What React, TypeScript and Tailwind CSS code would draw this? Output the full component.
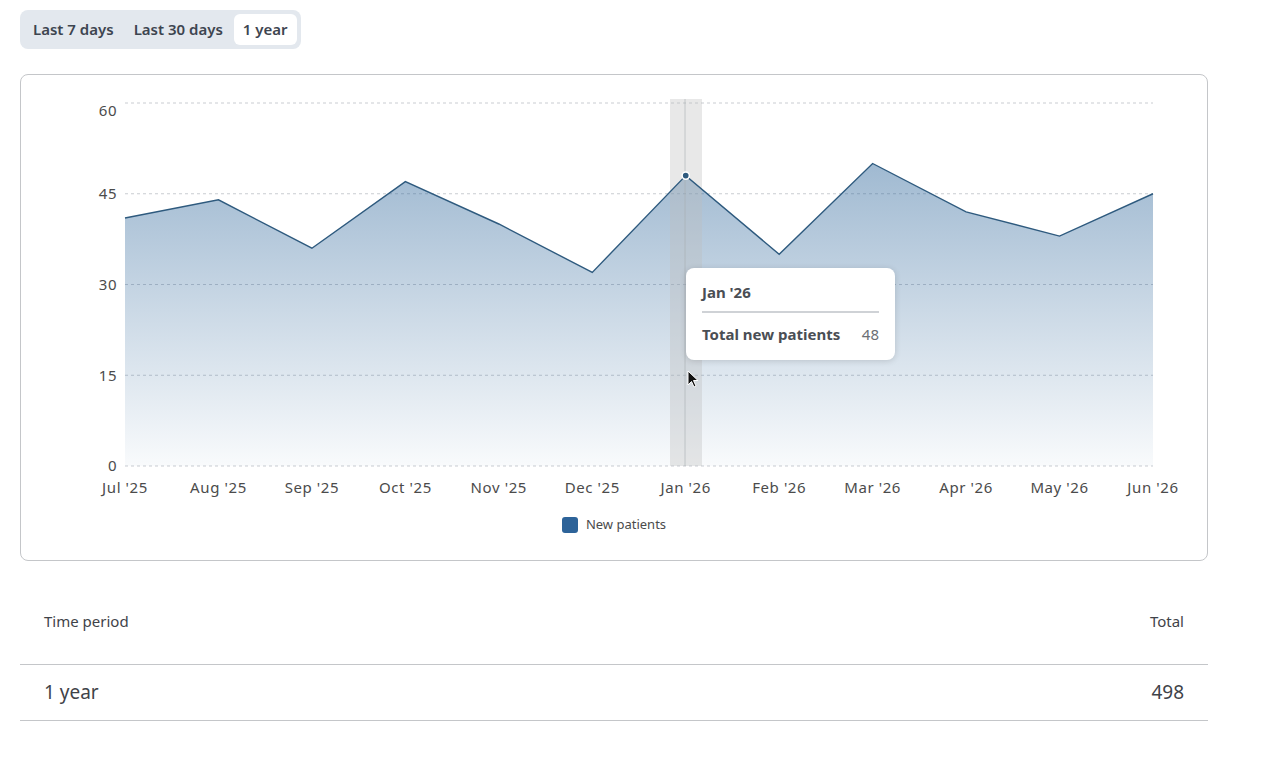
import { useState } from "react";

const data = [
  { label: "Jul '25", value: 41 },
  { label: "Aug '25", value: 44 },
  { label: "Sep '25", value: 36 },
  { label: "Oct '25", value: 47 },
  { label: "Nov '25", value: 40 },
  { label: "Dec '25", value: 32 },
  { label: "Jan '26", value: 48 },
  { label: "Feb '26", value: 35 },
  { label: "Mar '26", value: 50 },
  { label: "Apr '26", value: 42 },
  { label: "May '26", value: 38 },
  { label: "Jun '26", value: 45 },
];

const ranges = ["Last 7 days", "Last 30 days", "1 year"];

// plot area in page coordinates, card sits at (21, 75)
const X0 = 125;
const X1 = 1153;
const Y0 = 466;
const PX = (X1 - X0) / (data.length - 1);
const PY = (Y0 - 103) / 60;

const px = (i: number) => X0 + i * PX;
const py = (v: number) => Y0 - v * PY;

function Chart() {
  const line = data.map((d, i) => `${i === 0 ? "M" : "L"}${px(i)},${py(d.value)}`).join(" ");
  const area = `${line} L${X1},${Y0} L${X0},${Y0} Z`;
  const active = 6;

  return (
    <svg width={1186} height={430} className="block">
      <defs>
        <linearGradient id="fill" x1="0" y1="163" x2="0" y2="466" gradientUnits="userSpaceOnUse">
          <stop offset="0" stopColor="#2b6499" stopOpacity={0.45} />
          <stop offset="1" stopColor="#2b6499" stopOpacity={0.03} />
        </linearGradient>
      </defs>
      <g transform="translate(-21,-75)">
        {[0, 15, 30, 45, 60].map((t) => (
          <line key={t} x1={X0} x2={X1} y1={py(t)} y2={py(t)} stroke="#c9ccd1" strokeDasharray="3 3" />
        ))}
        {[
          { t: "60", y: 111 },
          { t: "45", y: 194 },
          { t: "30", y: 285 },
          { t: "15", y: 376 },
          { t: "0", y: 466 },
        ].map((l) => (
          <text key={l.t} x={117} y={l.y} dy="0.35em" textAnchor="end" fontSize={15} letterSpacing={0.5} fill="#4b4b4b">
            {l.t}
          </text>
        ))}
        <path d={area} fill="url(#fill)" />
        <rect x={670} y={99} width={32} height={367} fill="#bdbdbd" fillOpacity={0.35} />
        <line x1={685} x2={685} y1={99} y2={466} stroke="#a9adb3" strokeOpacity={0.6} />
        <path d={line} fill="none" stroke="#2e5a7e" strokeWidth={1.4} />
        <circle cx={px(active)} cy={py(48)} r={3.6} fill="#2e5a7e" stroke="#fff" strokeWidth={1.5} />
        {data.map((d, i) => (
          <text key={d.label} x={px(i)} y={488} dy="0.35em" textAnchor="middle" fontSize={15} letterSpacing={0.6} fill="#4b4b4b">
            {d.label}
          </text>
        ))}
      </g>
    </svg>
  );
}

export default function App() {
  const [range, setRange] = useState("1 year");

  return (
    <div className="min-h-screen bg-white px-5 pt-[10px] font-['Noto_Sans','Lato',sans-serif] text-[#3f4349]">
      <div className="inline-flex gap-[2px] rounded-lg bg-[#e3e8ee] p-1">
        {ranges.map((r) => (
          <button
            key={r}
            onClick={() => setRange(r)}
            className={`rounded-md px-[9px] py-[6px] text-[15px] font-semibold leading-[19px] text-[#3d4550] ${
              range === r ? "bg-white" : ""
            }`}
          >
            {r}
          </button>
        ))}
      </div>

      <div className="relative mt-[25px] w-[1188px] rounded-lg border border-[#c4c6c9] bg-white">
        <Chart />
        <div className="flex items-center justify-center gap-2 pt-[10px] pb-[25px]">
          <span className="h-4 w-4 rounded-[3px] bg-[#2d6399]" />
          <span className="text-[13px] text-[#4b4b4b]">New patients</span>
        </div>

        <div className="absolute left-[665px] top-[193px] w-[209px] rounded-lg bg-white px-4 pt-[14px] pb-[16px] shadow-[0_1px_6px_rgba(0,0,0,0.15)]">
          <div className="text-[15px] font-bold leading-5 text-[#4a4e54]">Jan '26</div>
          <div className="mt-[9px] border-t-2 border-[#cfd2d6]" />
          <div className="mt-[11px] flex justify-between text-[15px] leading-5">
            <span className="font-bold text-[#4a4e54]">Total new patients</span>
            <span className="text-[#6b6f75]">48</span>
          </div>
        </div>

        <svg className="absolute left-[666px] top-[295px]" width="12" height="19" viewBox="0 0 12 19">
          <path d="M1 1 L1 15 L4.5 11.5 L7 17 L9 16 L6.5 10.5 L11 10.5 Z" fill="#111" stroke="#fff" strokeWidth="1" />
        </svg>
      </div>

      <div className="mt-[40px] w-[1188px]">
        <div className="flex items-center justify-between border-b border-[#c4c6c9] px-6 pt-[9px] pb-[32px] text-[15px] text-[#3f4349]">
          <span>Time period</span>
          <span>Total</span>
        </div>
        <div className="flex h-[56px] items-center justify-between border-b border-[#c4c6c9] px-6 text-[19px] text-[#3f4349]">
          <span>1 year</span>
          <span>498</span>
        </div>
      </div>
    </div>
  );
}
